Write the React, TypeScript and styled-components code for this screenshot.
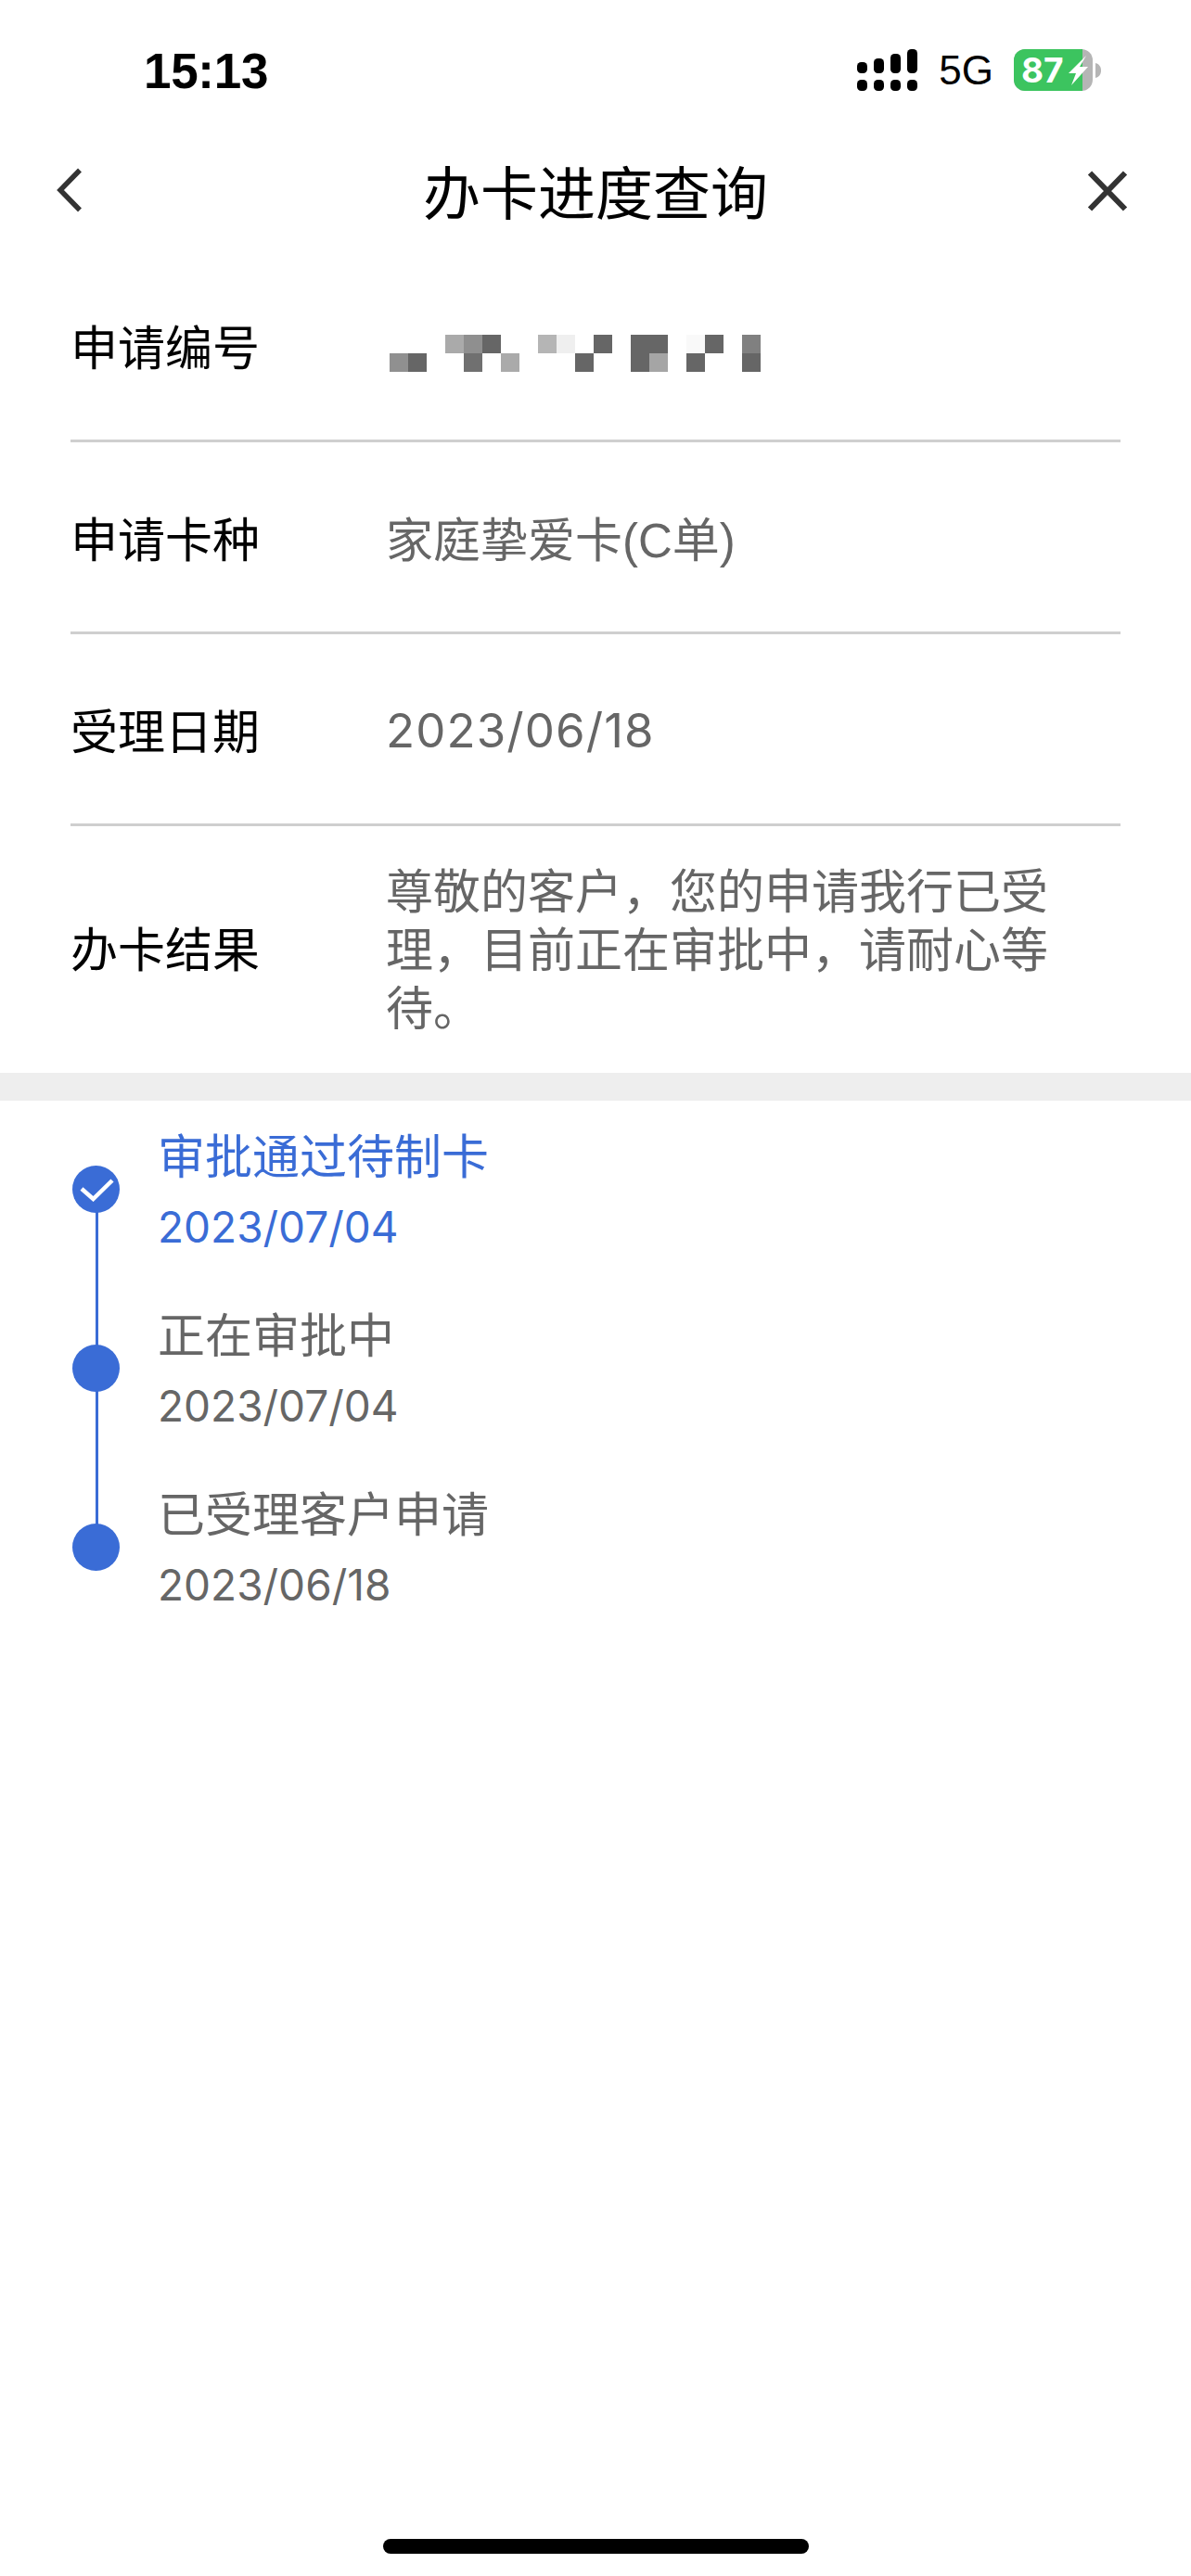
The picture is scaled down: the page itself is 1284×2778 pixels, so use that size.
import styled, { createGlobalStyle } from 'styled-components'

const sans = `"Liberation Sans", "Noto Sans CJK SC", sans-serif`
const digits = `Inter, "Liberation Sans", sans-serif`
const blue = '#3a6cd6'
const grey = '#666666'

const GlobalStyle = createGlobalStyle`
  html, body {
    margin: 0;
    padding: 0;
    background: #fff;
  }
`

const Page = styled.div`
  width: 1284px;
  height: 2778px;
  display: flex;
  flex-direction: column;
  background: #fff;
  font-family: ${sans};
  overflow: hidden;
`

const StatusBar = styled.div`
  height: 140px;
  flex: none;
  display: flex;
  align-items: center;
  justify-content: space-between;
  padding: 12px 97px 0 155px;
  box-sizing: border-box;
`

const Clock = styled.div`
  font: 700 53px ${sans};
  color: #000;
  letter-spacing: -0.3px;
`

const StatusIcons = styled.div`
  display: flex;
  align-items: center;
  gap: 22px;
`

const Network = styled.div`
  font: 400 44px ${sans};
  color: #000;
`

const NavBar = styled.div`
  height: 130px;
  flex: none;
  display: grid;
  grid-template-columns: 1fr auto 1fr;
  align-items: center;
  padding: 0 60px;
  box-sizing: border-box;
`

const NavTitle = styled.h1`
  margin: 0;
  font-size: 62px;
  font-weight: 400;
  color: #000;
`

const NavRight = styled.div`
  display: flex;
  justify-content: flex-end;
  padding-right: 8px;
`

const InfoList = styled.div`
  display: flex;
  flex-direction: column;
  padding: 0 76px;
`

const InfoRow = styled.div<{ $tall?: boolean }>`
  height: ${p => (p.$tall ? '259px' : '203px')};
  padding-bottom: ${p => (p.$tall ? '7px' : '1px')};
  display: flex;
  align-items: center;
  border-bottom: ${p => (p.$tall ? 'none' : '3px solid #cfcfcf')};
`

const Label = styled.div`
  width: 340px;
  flex: none;
  font-size: 51px;
  color: #000;
`

const Value = styled.div`
  font-size: 51px;
  line-height: 63px;
  color: ${grey};
  flex: 1;
  padding-right: 60px;
  margin-top: 9px;
`

const DateValue = styled.div`
  font: 400 51px ${digits};
  letter-spacing: 1.1px;
  color: ${grey};
  margin-top: 4px;
`

const Mosaic = styled.div`
  display: grid;
  grid-template-columns: repeat(20, 20px);
  grid-auto-rows: 20px;
  margin-left: 4px;
  margin-top: 19px;
`

const MosaicCell = styled.div<{ $shade: string }>`
  background: ${p => p.$shade};
`

const Band = styled.div`
  height: 30px;
  flex: none;
  background: #eeeeee;
`

const Timeline = styled.div`
  display: flex;
  flex-direction: column;
  padding: 25px 0 0 78px;
`

const Step = styled.div`
  height: 193px;
  display: flex;
  gap: 41px;
`

const Rail = styled.div`
  position: relative;
  width: 51px;
  flex: none;
  padding-top: 45px;
`

const Dot = styled.div`
  position: relative;
  width: 51px;
  height: 51px;
  border-radius: 50%;
  background: ${blue};
  display: flex;
  align-items: center;
  justify-content: center;
`

const Connector = styled.div`
  position: absolute;
  left: 25px;
  top: 70px;
  height: 193px;
  width: 3px;
  background: ${blue};
`

const StepText = styled.div<{ $active?: boolean }>`
  display: flex;
  flex-direction: column;
  padding-top: 4px;
  color: ${p => (p.$active ? blue : grey)};
`

const StepTitle = styled.div`
  font-size: 51px;
  line-height: 66px;
`

const StepDate = styled.div`
  font: 400 46px ${digits};
  line-height: 60px;
  margin-top: 11px;
`

const Spacer = styled.div`
  flex: 1;
`

const HomeIndicator = styled.div`
  width: 459px;
  height: 16px;
  flex: none;
  margin: 0 auto 24px;
  border-radius: 8px;
  background: #000;
`

const SignalIcon = () => (
  <svg width="66" height="46" viewBox="0 0 66 46" fill="#000">
    <rect x="0" y="14" width="11" height="12" rx="4.5" />
    <rect x="18" y="10" width="11" height="16" rx="4.5" />
    <rect x="36" y="5" width="11" height="21" rx="4.5" />
    <rect x="54" y="0" width="11" height="26" rx="4.5" />
    <rect x="0" y="33" width="11" height="12" rx="4.5" />
    <rect x="18" y="33" width="11" height="12" rx="4.5" />
    <rect x="36" y="33" width="11" height="12" rx="4.5" />
    <rect x="54" y="33" width="11" height="12" rx="4.5" />
  </svg>
)

const BatteryIcon = () => (
  <svg width="94" height="46" viewBox="0 0 94 46">
    <rect x="0" y="0" width="85" height="45" rx="12" fill="#b5b5b5" />
    <path d="M12 0H74V45H12A12 12 0 0 1 0 33V12A12 12 0 0 1 12 0Z" fill="#3cc45f" />
    <path d="M88 15C92 16 94 19 94 23C94 27 92 30 88 31Z" fill="#b5b5b5" />
    <text x="8" y="36" fontFamily="Inter" fontWeight="700" fontSize="37" fill="#fff">87</text>
    <path d="M78 7L59 26H67L62 39L80 19H71Z" fill="#fff" />
  </svg>
)

const BackIcon = () => (
  <svg width="30" height="54" viewBox="0 0 30 54" fill="none">
    <path d="M26 5.5L5 27L26 48.5" stroke="#333" strokeWidth="5.5" />
  </svg>
)

const CloseIcon = () => (
  <svg width="44" height="48" viewBox="0 0 44 48" fill="none">
    <path d="M3 5.5L41 44.5M41 5.5L3 44.5" stroke="#333" strokeWidth="6" />
  </svg>
)

const CheckIcon = () => (
  <svg width="38" height="26" viewBox="0 0 38 26" fill="none">
    <path d="M3 12L15.5 23L36 3" stroke="#fff" strokeWidth="4.5" />
  </svg>
)

const mosaicTop = ['', '', '', '#aaa', '#8f8f8f', '#666', '', '', '#b5b5b5', '#efefef', '', '#666', '', '#666', '#666', '', '#f9f9f9', '#666', '', '#808080']
const mosaicBottom = ['#909090', '#666', '', '', '#707070', '', '#aaa', '', '', '', '#666', '', '', '#666', '#a5a5a5', '', '#666', '', '', '#666']

const steps = [
  { title: '审批通过待制卡', date: '2023/07/04', active: true },
  { title: '正在审批中', date: '2023/07/04', active: false },
  { title: '已受理客户申请', date: '2023/06/18', active: false },
]

export default function App() {
  return (
    <Page>
      <GlobalStyle />
      <StatusBar>
        <Clock>15:13</Clock>
        <StatusIcons>
          <SignalIcon />
          <Network>5G</Network>
          <BatteryIcon />
        </StatusIcons>
      </StatusBar>
      <NavBar>
        <BackIcon />
        <NavTitle>办卡进度查询</NavTitle>
        <NavRight>
          <CloseIcon />
        </NavRight>
      </NavBar>
      <InfoList>
        <InfoRow>
          <Label>申请编号</Label>
          <Mosaic>
            {[...mosaicTop, ...mosaicBottom].map((shade, i) => (
              <MosaicCell key={i} $shade={shade || 'transparent'} />
            ))}
          </Mosaic>
        </InfoRow>
        <InfoRow>
          <Label>申请卡种</Label>
          <Value>家庭挚爱卡(C单)</Value>
        </InfoRow>
        <InfoRow>
          <Label>受理日期</Label>
          <DateValue>2023/06/18</DateValue>
        </InfoRow>
        <InfoRow $tall>
          <Label>办卡结果</Label>
          <Value>尊敬的客户，您的申请我行已受理，目前正在审批中，请耐心等待。</Value>
        </InfoRow>
      </InfoList>
      <Band />
      <Timeline>
        {steps.map((step, i) => (
          <Step key={step.title}>
            <Rail>
              {i < steps.length - 1 && <Connector />}
              <Dot>{step.active && <CheckIcon />}</Dot>
            </Rail>
            <StepText $active={step.active}>
              <StepTitle>{step.title}</StepTitle>
              <StepDate>{step.date}</StepDate>
            </StepText>
          </Step>
        ))}
      </Timeline>
      <Spacer />
      <HomeIndicator />
    </Page>
  )
}
